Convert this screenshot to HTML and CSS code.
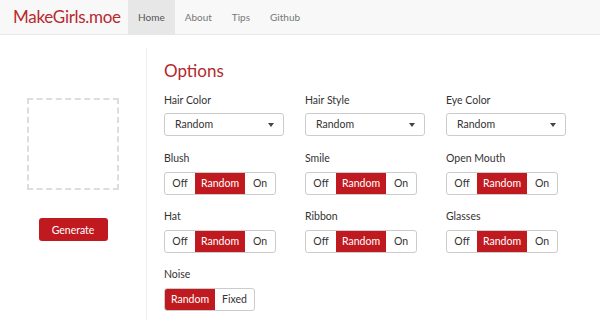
FILE: index.html
```html
<!DOCTYPE html>
<html lang="en">
<head>
  <meta charset="UTF-8">
  <title>MakeGirls.moe</title>
  <link rel="stylesheet" href="styles.css">
</head>
<body>
  <nav class="navbar">
    <a class="brand" href="#">MakeGirls.moe</a>
    <a class="nav-link active" href="#">Home</a>
    <a class="nav-link" href="#">About</a>
    <a class="nav-link" href="#">Tips</a>
    <a class="nav-link" href="#">Github</a>
  </nav>

  <div class="main">
    <div class="side">
      <div class="canvas-box"></div>
      <button class="btn-generate">Generate</button>
    </div>

    <div class="options">
      <h2>Options</h2>
      <div class="grid">
        <div class="field">
          <label>Hair Color</label>
          <div class="select">Random <span class="caret"></span></div>
        </div>
        <div class="field">
          <label>Hair Style</label>
          <div class="select">Random <span class="caret"></span></div>
        </div>
        <div class="field">
          <label>Eye Color</label>
          <div class="select">Random <span class="caret"></span></div>
        </div>

        <div class="field">
          <label>Blush</label>
          <div class="btn-group"><span class="off">Off</span><span class="mid on-state">Random</span><span class="on">On</span></div>
        </div>
        <div class="field">
          <label>Smile</label>
          <div class="btn-group"><span class="off">Off</span><span class="mid on-state">Random</span><span class="on">On</span></div>
        </div>
        <div class="field">
          <label>Open Mouth</label>
          <div class="btn-group"><span class="off">Off</span><span class="mid on-state">Random</span><span class="on">On</span></div>
        </div>

        <div class="field">
          <label>Hat</label>
          <div class="btn-group"><span class="off">Off</span><span class="mid on-state">Random</span><span class="on">On</span></div>
        </div>
        <div class="field">
          <label>Ribbon</label>
          <div class="btn-group"><span class="off">Off</span><span class="mid on-state">Random</span><span class="on">On</span></div>
        </div>
        <div class="field">
          <label>Glasses</label>
          <div class="btn-group"><span class="off">Off</span><span class="mid on-state">Random</span><span class="on">On</span></div>
        </div>

        <div class="field">
          <label>Noise</label>
          <div class="btn-group"><span class="mid on-state">Random</span><span class="fixed">Fixed</span></div>
        </div>
      </div>
    </div>
  </div>
</body>
</html>
```

FILE: styles.css
```css
body {
  margin: 0;
  background-color: #fff;
  color: #333;
  font-family: Lato, "Open Sans", sans-serif;
}
.navbar {
  display: flex;
  height: 34px;
  background-color: #f8f8f8;
  border-bottom: 1px solid #e7e7e7;
}
.brand {
  flex-shrink: 0;
  width: 115px;
  padding-left: 13px;
  line-height: 34px;
  font-size: 17px;
  letter-spacing: -0.3px;
  color: #b8282e;
  text-decoration: none;
}
.nav-link {
  padding: 0 10px;
  line-height: 34px;
  font-size: 10px;
  color: #777;
  text-decoration: none;
}
.nav-link.active {
  background-color: #e7e7e7;
  color: #555;
}
.main {
  display: flex;
  padding-top: 13px;
}
.side {
  width: 146px;
  height: 272px;
  border-right: 1px solid #eee;
  display: flex;
  flex-direction: column;
  align-items: center;
}
.canvas-box {
  width: 88px;
  height: 88px;
  margin-top: 50px;
  border: 2px dashed #ddd;
}
.btn-generate {
  margin-top: 28px;
  width: 69px;
  height: 23px;
  background-color: #c01a20;
  color: #fff;
  border: none;
  border-radius: 3px;
  font-family: Lato, sans-serif;
  font-size: 10.5px;
}
.options {
  padding-left: 17px;
}
.options h2 {
  margin: 12px 0 10px 0;
  font-size: 17px;
  line-height: 22px;
  font-weight: normal;
  color: #b3282d;
}
.grid {
  display: grid;
  grid-template-columns: 141px 141px 141px;
}
.field {
  height: 58px;
}
.field label {
  display: block;
  height: 16px;
  line-height: 16px;
  margin-bottom: 5px;
  font-size: 10.5px;
  color: #333;
}
.select {
  position: relative;
  box-sizing: border-box;
  width: 120px;
  height: 23px;
  padding-left: 10px;
  line-height: 21px;
  font-size: 10.5px;
  border: 1px solid #ccc;
  border-radius: 3px;
}
.caret {
  position: absolute;
  right: 9px;
  top: 9px;
  border-left: 3px solid transparent;
  border-right: 3px solid transparent;
  border-top: 4px solid #444;
}
.btn-group {
  display: inline-flex;
  height: 23px;
  font-size: 10.5px;
  border: 1px solid #ccc;
  border-radius: 3px;
  box-sizing: border-box;
  overflow: hidden;
}
.btn-group span {
  display: block;
  line-height: 21px;
  text-align: center;
}
.btn-group .off,
.btn-group .on {
  width: 30px;
}
.btn-group .mid {
  width: 50px;
}
.btn-group .fixed {
  width: 39px;
}
.btn-group .on-state {
  background-color: #c01a20;
  color: #fff;
}
```
